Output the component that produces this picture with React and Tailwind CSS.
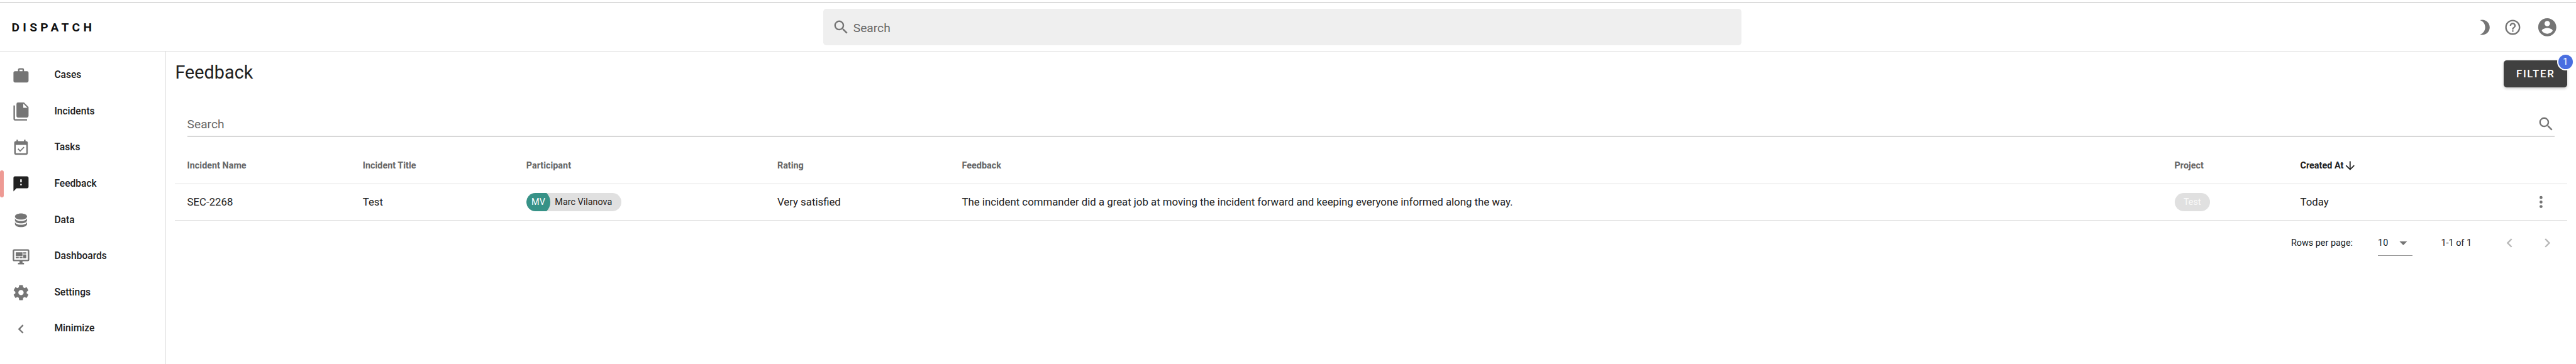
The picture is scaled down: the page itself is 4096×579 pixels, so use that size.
const ICONS = {
  briefcase: "M10,2H14A2,2 0 0,1 16,4V6H20A2,2 0 0,1 22,8V19A2,2 0 0,1 20,21H4C2.89,21 2,20.1 2,19V8C2,6.89 2.89,6 4,6H8V4C8,2.89 8.89,2 10,2M14,6V4H10V6H14Z",
  files: "M15,7H20.5L15,1.5V7M8,0H16L22,6V18A2,2 0 0,1 20,20H8C6.89,20 6,19.1 6,18V2A2,2 0 0,1 8,0M4,4V22H20V24H4A2,2 0 0,1 2,22V4H4Z",
  calendar: "M19,19H5V8H19M16,1V3H8V1H6V3H5C3.89,3 3,3.89 3,5V19A2,2 0 0,0 5,21H19A2,2 0 0,0 21,19V5C21,3.89 20.1,3 19,3H18V1M16.5,11.5L15.4,10.4L10.9,14.9L8.6,12.6L7.5,13.7L10.9,17.1Z",
  message: "M13,10H11V6H13M13,14H11V12H13M20,2H4A2,2 0 0,0 2,4V22L6,18H20A2,2 0 0,0 22,16V4C22,2.89 21.1,2 20,2Z",
  database: "M12,3C7.58,3 4,4.79 4,7C4,9.21 7.58,11 12,11C16.42,11 20,9.21 20,7C20,4.79 16.42,3 12,3M4,9V12C4,14.21 7.58,16 12,16C16.42,16 20,14.21 20,12V9C20,11.21 16.42,13 12,13C7.58,13 4,11.21 4,9M4,14V17C4,19.21 7.58,21 12,21C16.42,21 20,19.21 20,17V14C20,16.21 16.42,18 12,18C7.58,18 4,16.21 4,14Z",
  monitor: "M21,16V4H3V16H21M21,2A2,2 0 0,1 23,4V16A2,2 0 0,1 21,18H14V20H16V22H8V20H10V18H3C1.89,18 1,17.1 1,16V4C1,2.89 1.89,2 3,2H21M5,6H14V11H5V6M15,6H19V8H15V6M19,9V14H15V9H19M5,12H9V14H5V12M10,12H14V14H10V12Z",
  cog: "M12,15.5A3.5,3.5 0 0,1 8.5,12A3.5,3.5 0 0,1 12,8.5A3.5,3.5 0 0,1 15.5,12A3.5,3.5 0 0,1 12,15.5M19.43,12.97C19.47,12.65 19.5,12.33 19.5,12C19.5,11.67 19.47,11.34 19.43,11L21.54,9.37C21.73,9.22 21.78,8.95 21.66,8.73L19.66,5.27C19.54,5.05 19.27,4.96 19.05,5.05L16.56,6.05C16.04,5.66 15.5,5.32 14.87,5.07L14.5,2.42C14.46,2.18 14.25,2 14,2H10C9.75,2 9.54,2.18 9.5,2.42L9.13,5.07C8.5,5.32 7.96,5.66 7.44,6.05L4.95,5.05C4.73,4.96 4.46,5.05 4.34,5.27L2.34,8.73C2.21,8.95 2.27,9.22 2.46,9.37L4.57,11C4.53,11.34 4.5,11.67 4.5,12C4.5,12.33 4.53,12.65 4.57,12.97L2.46,14.63C2.27,14.78 2.21,15.05 2.34,15.27L4.34,18.73C4.46,18.95 4.73,19.03 4.95,18.95L7.44,17.94C7.96,18.34 8.5,18.68 9.13,18.93L9.5,21.58C9.54,21.82 9.75,22 10,22H14C14.25,22 14.46,21.82 14.5,21.58L14.87,18.93C15.5,18.67 16.04,18.34 16.56,17.94L19.05,18.95C19.27,19.03 19.54,18.95 19.66,18.73L21.66,15.27C21.78,15.05 21.73,14.78 21.54,14.63L19.43,12.97Z",
  left: "M15.41,16.58L10.83,12L15.41,7.41L14,6L8,12L14,18L15.41,16.58Z",
  right: "M8.59,16.58L13.17,12L8.59,7.41L10,6L16,12L10,18L8.59,16.58Z",
  magnify: "M9.5,3A6.5,6.5 0 0,1 16,9.5C16,11.11 15.41,12.59 14.44,13.73L14.71,14H15.5L20.5,19L19,20.5L14,15.5V14.71L13.73,14.44C12.59,15.41 11.11,16 9.5,16A6.5,6.5 0 0,1 3,9.5A6.5,6.5 0 0,1 9.5,3M9.5,5C7,5 5,7 5,9.5C5,12 7,14 9.5,14C12,14 14,12 14,9.5C14,7 12,5 9.5,5Z",
  moon: "M9 2c-1.05 0-2.05.16-3 .46 4.06 1.27 7 5.06 7 9.54s-2.94 8.27-7 9.54c.95.3 1.95.46 3 .46 5.52 0 10-4.48 10-10S14.52 2 9 2z",
  help: "M11,18H13V16H11V18M12,2A10,10 0 0,0 2,12A10,10 0 0,0 12,22A10,10 0 0,0 22,12A10,10 0 0,0 12,2M12,20C7.59,20 4,16.41 4,12C4,7.59 7.59,4 12,4C16.41,4 20,7.59 20,12C20,16.41 16.41,20 12,20M12,6A4,4 0 0,0 8,10H10A2,2 0 0,1 12,8A2,2 0 0,1 14,10C14,12 11,11.75 11,15H13C13,12.75 16,12.5 16,10A4,4 0 0,0 12,6Z",
  account: "M12,19.2C9.5,19.2 7.29,17.92 6,16C6.03,14 10,12.9 12,12.9C14,12.9 17.97,14 18,16C16.71,17.92 14.5,19.2 12,19.2M12,5A3,3 0 0,1 15,8A3,3 0 0,1 12,11A3,3 0 0,1 9,8A3,3 0 0,1 12,5M12,2A10,10 0 0,0 2,12A10,10 0 0,0 12,22A10,10 0 0,0 22,12C22,6.47 17.5,2 12,2Z",
  down: "M11,4H13V16L18.5,10.5L19.92,11.92L12,19.84L4.08,11.92L5.5,10.5L11,16V4Z",
  caret: "M7,10L12,15L17,10H7Z",
  dots: "M12,16A2,2 0 0,1 14,18A2,2 0 0,1 12,20A2,2 0 0,1 10,18A2,2 0 0,1 12,16M12,10A2,2 0 0,1 14,12A2,2 0 0,1 12,14A2,2 0 0,1 10,12A2,2 0 0,1 12,10M12,4A2,2 0 0,1 14,6A2,2 0 0,1 12,8A2,2 0 0,1 10,6A2,2 0 0,1 12,4Z",
};

function Icon({ name, className = "size-[28.8px] text-[#757575]" }) {
  return (
    <svg viewBox="0 0 24 24" className={"shrink-0 fill-current " + className}>
      <path d={ICONS[name]} />
    </svg>
  );
}

const NAV = [
  ["briefcase", "Cases"],
  ["files", "Incidents"],
  ["calendar", "Tasks"],
  ["message", "Feedback"],
  ["database", "Data"],
  ["monitor", "Dashboards"],
  ["cog", "Settings"],
  ["left", "Minimize"],
];

const GRID = "grid grid-cols-[279.2px_260px_399.2px_293.6px_1928px_200px_1fr] items-center border-b-[1.2px] border-[#e0e0e0] pl-[19.2px] h-[58.8px]";

export default function App() {
  return (
    <div className="flex h-[579px] w-[4096px] flex-col overflow-hidden bg-white font-[Roboto,sans-serif] text-[#212121]">
      <div className="h-[4.8px] shrink-0 pt-[3.2px]">
        <div className="h-[1.6px] bg-[#dcdcdc]" />
      </div>
      <header className="flex h-[76.8px] shrink-0 items-center border-b-[1.2px] border-[#e0e0e0] pl-[18.4px] pr-[28.4px] pt-[1.2px]">
        <div className="w-[1290.4px] pt-[1.6px] text-[19.2px] font-bold tracking-[5.35px] text-[#111]">DISPATCH</div>
        <div className="flex h-[57.6px] w-[1460px] items-center rounded-[4.8px] bg-[#efefef] pl-[14.4px] text-[19.2px] text-[#666]">
          <Icon name="magnify" />
          <span className="pl-[4.8px] pt-[4px]">Search</span>
        </div>
        <div className="ml-auto flex items-center">
          <Icon name="moon" />
          <Icon name="help" className="ml-[15.6px] size-[28.8px] text-[#757575]" />
          <Icon name="account" className="ml-[23.4px] size-[34.6px] text-[#757575]" />
        </div>
      </header>
      <div className="flex min-h-0 flex-1">
        <nav className="w-[264px] shrink-0 border-r border-[#e0e0e0] pt-[9.6px]">
          {NAV.map(([icon, label]) => {
            const active = label === "Feedback";
            return (
              <div key={label} className="flex h-[57.6px] items-center">
                <div className={"h-[43.2px] w-[6.4px] rounded-[3.2px] " + (active ? "bg-[#ee9a94]" : "")} />
                <Icon name={icon} className={"ml-[12.8px] size-[28.8px] " + (active ? "text-[#212121]" : "text-[#757575]")} />
                <span className="ml-[38.4px] text-[15.6px] font-medium">{label}</span>
              </div>
            );
          })}
        </nav>
        <main className="flex-1 px-[14.4px]">
          <div className="flex h-[72px] items-start justify-between pt-[14.4px]">
            <h1 className="text-[28.8px] leading-[38.4px]">Feedback</h1>
            <div className="relative flex h-[43.2px] w-[100.8px] items-center justify-center rounded-[4.8px] bg-[#404040] pl-[1px] pt-[1px] text-[16.8px] font-medium tracking-[1.7px] text-white shadow-[0_2px_4px_rgba(0,0,0,0.2)]">
              FILTER
              <span className="absolute -right-[11.2px] -top-[11.2px] flex size-[27.2px] items-center justify-center rounded-full border-[2.4px] border-white bg-[#496ee0] text-[14.4px] font-normal tracking-normal">1</span>
            </div>
          </div>
          <div className="mx-[19.2px] flex h-[63.6px] items-end justify-between border-b-[1.2px] border-[#949494] pb-[4.8px] text-[19.2px] text-[#666]">
            <span className="leading-[27.6px]">Search</span>
            <Icon name="magnify" />
          </div>
          <div className={GRID + " mt-[16.6px] pt-[3px] text-[14.4px] font-bold text-[#666]"}>
            <span>Incident Name</span>
            <span>Incident Title</span>
            <span>Participant</span>
            <span>Rating</span>
            <span>Feedback</span>
            <span>Project</span>
            <span className="flex items-center text-[#212121]">
              Created At
              <Icon name="down" className="size-[21.6px]" />
            </span>
          </div>
          <div className={GRID + " text-[16.8px]"}>
            <span>SEC-2268</span>
            <span>Test</span>
            <span className="flex">
              <span className="flex h-[28.8px] items-center overflow-hidden rounded-[14.4px] bg-[#e0e0e0] pr-[14.4px] text-[14.4px]">
                <span className="flex size-[38.4px] items-center justify-center rounded-full bg-[#379287] pt-[1.6px] text-white">MV</span>
                <span className="pl-[7.2px]">Marc Vilanova</span>
              </span>
            </span>
            <span>Very satisfied</span>
            <span>The incident commander did a great job at moving the incident forward and keeping everyone informed along the way.</span>
            <span className="flex">
              <span className="flex h-[28.8px] items-center rounded-[14.4px] bg-[#e0e0e0] px-[14.4px] text-[14.4px] text-[#fafafa]">Test</span>
            </span>
            <span className="flex items-center justify-between pr-[26.4px]">
              Today
              <Icon name="dots" />
            </span>
          </div>
          <div className="flex h-[70px] items-center justify-end text-[14.4px]">
            <span className="pt-[1.6px]">Rows per page:</span>
            <div className="ml-[40px] mt-[2.4px] flex h-[38.4px] w-[54.8px] items-center border-b-[1.2px] border-[#949494]">
              <span className="flex-1">10</span>
              <Icon name="caret" className="mb-[1.6px] size-[28.8px] text-[#757575]" />
            </div>
            <span className="ml-[45.6px] pt-[1.6px]">1-1 of 1</span>
            <Icon name="left" className="ml-[46px] size-[28.8px] text-[#b9b9b9]" />
            <Icon name="right" className="ml-[31.2px] mr-[16.8px] size-[28.8px] text-[#b9b9b9]" />
          </div>
        </main>
      </div>
    </div>
  );
}
